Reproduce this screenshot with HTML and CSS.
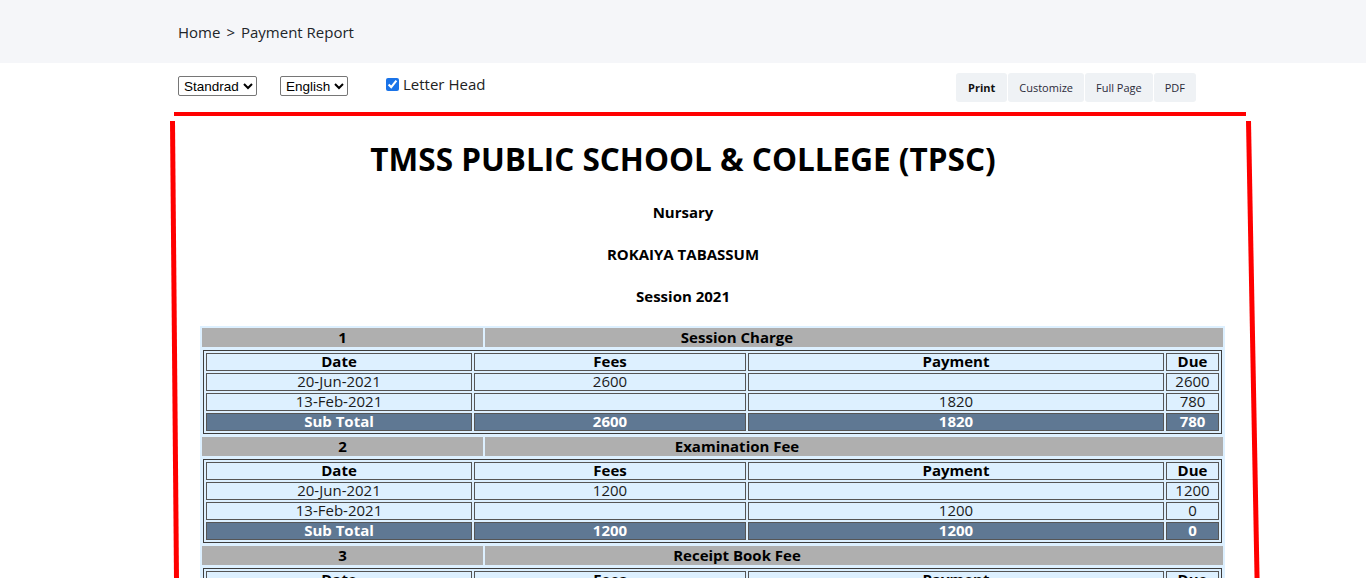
FILE: index.html
```html
<!DOCTYPE html>
<html lang="en">
<head>
<meta charset="utf-8">
<title>Payment Report</title>
<link rel="stylesheet" href="styles.css">
</head>
<body>
<header class="topbar">
  <nav class="crumbs"><span>Home</span><span class="sep">&gt;</span><span>Payment Report</span></nav>
</header>

<div class="toolbar">
  <select class="sel sel-std"><option>Standrad</option></select>
  <select class="sel sel-lang"><option>English</option></select>
  <label class="check"><input type="checkbox" checked> Letter Head</label>
  <div class="btn-group">
    <button class="btn btn-active">Print</button>
    <button class="btn">Customize</button>
    <button class="btn">Full Page</button>
    <button class="btn">PDF</button>
  </div>
</div>

<main class="report">
  <div class="frame" aria-hidden="true"></div>
  <h1 class="title">TMSS PUBLIC SCHOOL &amp; COLLEGE (TPSC)</h1>
  <h5 class="sub">Nursary</h5>
  <h5 class="sub">ROKAIYA TABASSUM</h5>
  <h5 class="sub">Session 2021</h5>

  <table class="outer">
    <colgroup><col class="c-num"><col class="c-name"></colgroup>
    <tbody>
      <tr class="grp"><td>1</td><td class="grp-name">Session Charge</td></tr>
      <tr><td colspan="2" class="holder">
        <table class="inner">
          <colgroup><col class="c-date"><col class="c-fees"><col class="c-pay"><col class="c-due"></colgroup>
          <tr class="head"><td>Date</td><td>Fees</td><td>Payment</td><td>Due</td></tr>
          <tr><td>20-Jun-2021</td><td>2600</td><td></td><td>2600</td></tr>
          <tr><td>13-Feb-2021</td><td></td><td>1820</td><td>780</td></tr>
          <tr class="total"><td>Sub Total</td><td>2600</td><td>1820</td><td>780</td></tr>
        </table>
      </td></tr>

      <tr class="grp"><td>2</td><td class="grp-name">Examination Fee</td></tr>
      <tr><td colspan="2" class="holder">
        <table class="inner">
          <colgroup><col class="c-date"><col class="c-fees"><col class="c-pay"><col class="c-due"></colgroup>
          <tr class="head"><td>Date</td><td>Fees</td><td>Payment</td><td>Due</td></tr>
          <tr><td>20-Jun-2021</td><td>1200</td><td></td><td>1200</td></tr>
          <tr><td>13-Feb-2021</td><td></td><td>1200</td><td>0</td></tr>
          <tr class="total"><td>Sub Total</td><td>1200</td><td>1200</td><td>0</td></tr>
        </table>
      </td></tr>

      <tr class="grp"><td>3</td><td class="grp-name">Receipt Book Fee</td></tr>
      <tr><td colspan="2" class="holder">
        <table class="inner">
          <colgroup><col class="c-date"><col class="c-fees"><col class="c-pay"><col class="c-due"></colgroup>
          <tr class="head"><td>Date</td><td>Fees</td><td>Payment</td><td>Due</td></tr>
        </table>
      </td></tr>
    </tbody>
  </table>
</main>
</body>
</html>
```

FILE: styles.css
```css
html {
  scrollbar-width: none;
}
html::-webkit-scrollbar {
  display: none;
}
body {
  margin: 0;
  font-family: "Open Sans", "Noto Sans", sans-serif;
  color: #212529;
  background: #fff;
}

.topbar {
  height: 63px;
  background: #f5f6f9;
  display: flex;
  align-items: center;
  padding-left: 178px;
  box-sizing: border-box;
}
.crumbs {
  font-size: 15px;
  line-height: 20px;
  display: flex;
  gap: 6px;
}

.toolbar {
  height: 49px;
  box-sizing: border-box;
  padding: 10px 170px 0 178px;
  display: flex;
  align-items: flex-start;
}
.sel {
  font-family: "Liberation Sans", Arial, sans-serif;
  font-size: 13.5px;
  height: 20px;
  margin-top: 3px;
  padding: 0 0 0 1px;
  border: 1px solid #767676;
  border-radius: 2px;
  background: #fff;
  color: #000;
}
.sel-std { width: 79px; }
.sel-lang { width: 68px; margin-left: 23px; }
.check {
  margin-left: 38px;
  margin-top: 1px;
  font-size: 15px;
  line-height: 20px;
  display: flex;
  align-items: center;
  gap: 4px;
  color: #222;
}
.check input {
  margin: 0;
  width: 13px;
  height: 13px;
  accent-color: #1a73e8;
}
.btn-group {
  margin-left: auto;
  display: flex;
  gap: 1px;
}
.btn {
  font-family: "Open Sans", sans-serif;
  font-size: 11px;
  height: 29px;
  padding: 0 11px;
  border: none;
  border-radius: 3px;
  background: #eff2f5;
  color: #2b2b3a;
}
.btn-active {
  font-weight: 700;
  color: #111;
  padding: 0 12px;
}

.report {
  position: relative;
  padding-top: 4px;
}
.frame {
  position: absolute;
  left: 174px;
  top: 0;
  width: 1072px;
  height: 800px;
  border-top: 4.5px solid #ff0000;
  box-sizing: border-box;
  pointer-events: none;
}
.frame::before,
.frame::after {
  content: "";
  position: absolute;
  top: 5px;
  width: 5px;
  height: 700px;
  background: #ff0000;
  transform-origin: top center;
}
.frame::before {
  left: -4px;
  transform: rotate(-0.5deg);
}
.frame::after {
  left: 1072px;
  transform: rotate(-1.07deg);
}

.title {
  margin: 23px 0 0;
  text-align: center;
  font-size: 31.5px;
  line-height: 40px;
  font-weight: 700;
  color: #000;
}
.sub {
  margin: 22px 0 0;
  text-align: center;
  font-size: 15px;
  line-height: 20px;
  font-weight: 700;
  color: #000;
}
.title + .sub {
  margin-top: 23px;
}

.outer {
  margin: 20px 0 0 200px;
  width: 1025px;
  table-layout: fixed;
  border-collapse: separate;
  border-spacing: 2px;
  background: #ddf0ff;
  font-size: 15px;
  line-height: 15px;
  color: #000;
}
.c-num { width: 281px; }
.c-name { width: 738px; }
.outer td {
  padding: 0;
  text-align: center;
}
.grp td {
  height: 19px;
  padding-bottom: 1px;
  box-sizing: border-box;
  background: #afafaf;
  font-weight: 700;
}
.grp td.grp-name {
  padding-right: 234px;
}
.outer td.holder {
  padding: 1px;
}
.inner {
  width: 100%;
  table-layout: fixed;
  border-collapse: separate;
  border-spacing: 2px;
  border: 1px solid #3c3c3c;
  background: #ddf0ff;
}
.c-date { width: 266px; }
.c-fees { width: 272px; }
.c-pay { width: 416px; }
.c-due { width: 53px; }
.inner td {
  height: 18px;
  padding: 0 0 1px;
  box-sizing: border-box;
  border: 1px solid #555;
  text-align: center;
  color: #1b1b1b;
  background: #ddf0ff;
}
.inner .head td {
  font-weight: 700;
  color: #000;
}
.inner .total td {
  background: #5f7893;
  color: #fff;
  font-weight: 700;
}
```
